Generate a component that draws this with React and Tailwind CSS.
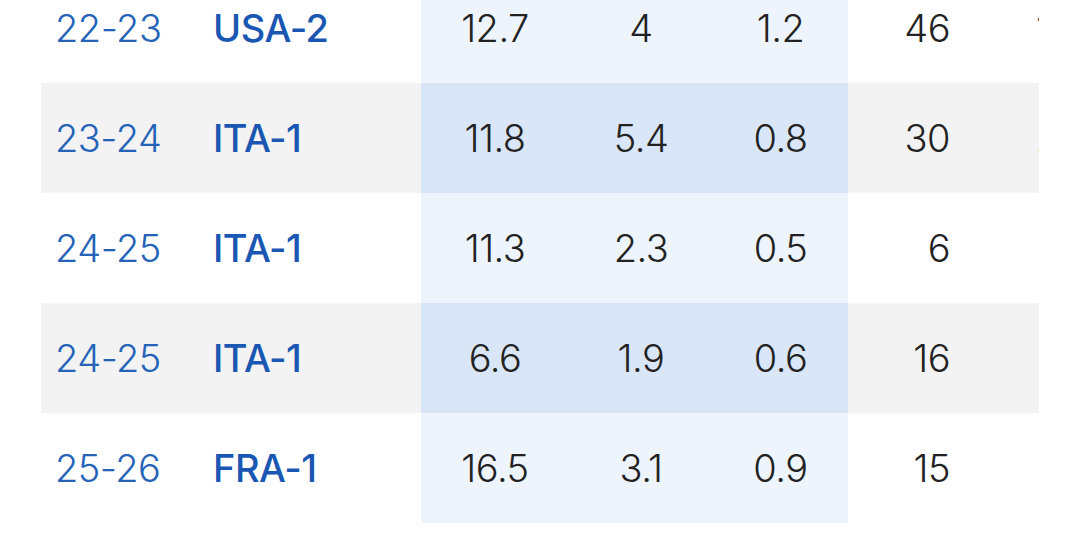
import React from 'react';

const rows = [
  { season: '22-23', league: 'USA-2', a: '12.7', b: '4', c: '1.2', d: '46', e: '10' },
  { season: '23-24', league: 'ITA-1', a: '11.8', b: '5.4', c: '0.8', d: '30', e: '22' },
  { season: '24-25', league: 'ITA-1', a: '11.3', b: '2.3', c: '0.5', d: '6', e: '' },
  { season: '24-25', league: 'ITA-1', a: '6.6', b: '1.9', c: '0.6', d: '16', e: '' },
  { season: '25-26', league: 'FRA-1', a: '16.5', b: '3.1', c: '0.9', d: '15', e: '' },
];

export default function App() {
  return (
    <div className="h-[537px] w-[1078px] overflow-hidden bg-white" style={{ fontFamily: 'Inter, "Liberation Sans", sans-serif' }}>
      <div className="-mt-[27px] ml-[41px] w-[998px] overflow-hidden">
        {rows.map((r, i) => {
          const odd = i % 2 === 1;
          const hl = odd ? 'bg-[#d9e6f7]' : 'bg-[#eef4fc]';
          return (
            <div key={i} className={`flex h-[110px] text-[38px] tracking-[-0.5px] ${odd ? 'bg-[#f3f3f3]' : 'bg-white'}`}>
              <div className="flex w-[159px] shrink-0 items-center pl-[14px] font-light text-[#2563b8]">{r.season}</div>
              <div className="flex w-[221px] shrink-0 items-center pl-[13px] font-medium text-[#1a57b2]">{r.league}</div>
              <div className={`flex w-[148px] shrink-0 items-center justify-center font-light text-[#222] ${hl}`}>{r.a}</div>
              <div className={`flex w-[144px] shrink-0 items-center justify-center font-light text-[#222] ${hl}`}>{r.b}</div>
              <div className={`flex w-[135px] shrink-0 items-center justify-center font-light text-[#222] ${hl}`}>{r.c}</div>
              <div className="flex w-[142px] shrink-0 items-center justify-end pr-[40px] font-light text-[#222]">{r.d}</div>
              <div className="flex w-[90px] shrink-0 items-center pl-[46px] font-light text-[#222]">{r.e}</div>
            </div>
          );
        })}
      </div>
    </div>
  );
}
